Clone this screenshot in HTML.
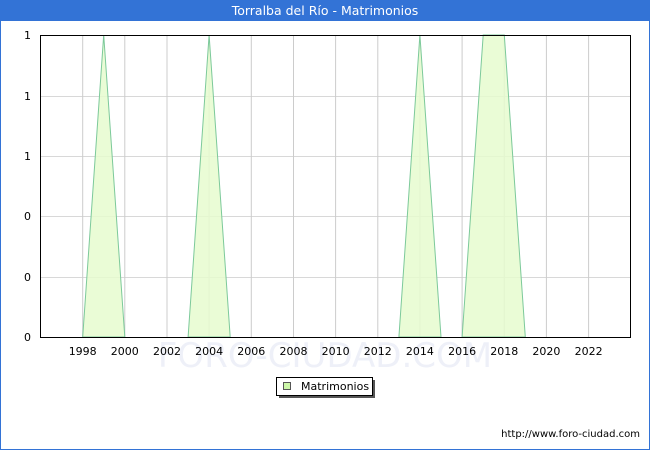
<!DOCTYPE html><html><head><style>
body{margin:0;width:650px;height:450px;overflow:hidden;font-family:"DejaVu Sans",sans-serif;}
.frame{position:absolute;left:0;top:0;width:648px;height:448px;border:1px solid #3373d6;background:#fff}
.title{position:absolute;left:0;top:0;width:650px;height:21px;background:#3373d6;color:#fff;font-size:12.5px;text-align:center;line-height:22px}
</style></head><body>
<div class="frame"></div>
<div class="title">Torralba del Río - Matrimonios</div>
<svg width="650" height="450" style="position:absolute;left:0;top:0" font-family="DejaVu Sans,sans-serif" font-size="11">
<text x="325" y="367" font-size="34" fill="#eef0f8" text-anchor="middle">FORO-CIUDAD.COM</text>
<g stroke="#d8d8d8" stroke-width="1">
<line x1="40" y1="96.5" x2="630" y2="96.5"/><line x1="40" y1="156.5" x2="630" y2="156.5"/><line x1="40" y1="216.5" x2="630" y2="216.5"/><line x1="40" y1="277.5" x2="630" y2="277.5"/>
</g>
<g stroke="#cccccc" stroke-width="1">
<line x1="82.7" y1="35" x2="82.7" y2="337"/><line x1="124.8" y1="35" x2="124.8" y2="337"/><line x1="167" y1="35" x2="167" y2="337"/><line x1="209.1" y1="35" x2="209.1" y2="337"/><line x1="251.3" y1="35" x2="251.3" y2="337"/><line x1="293.5" y1="35" x2="293.5" y2="337"/><line x1="335.6" y1="35" x2="335.6" y2="337"/><line x1="377.8" y1="35" x2="377.8" y2="337"/><line x1="419.9" y1="35" x2="419.9" y2="337"/><line x1="462.1" y1="35" x2="462.1" y2="337"/><line x1="504.3" y1="35" x2="504.3" y2="337"/><line x1="546.4" y1="35" x2="546.4" y2="337"/><line x1="588.6" y1="35" x2="588.6" y2="337"/>
</g>
<g fill="#e6fccf" fill-opacity="0.85" stroke="#7cc99a" stroke-width="1">
<polygon points="82.7,337 103.7,35 124.8,337"/>
<polygon points="188.1,337 209.1,35 230.2,337"/>
<polygon points="398.9,337 419.9,35 441,337"/>
<polygon points="462.1,337 483.2,35 504.3,35 525.3,337"/>
</g>
<rect x="40.5" y="35.5" width="590" height="302" fill="none" stroke="#000" stroke-width="1"/>
<g text-anchor="end" fill="#000">
<text x="31" y="39">1</text><text x="31" y="100">1</text><text x="31" y="160">1</text><text x="31" y="220">0</text><text x="31" y="281">0</text><text x="31" y="341">0</text>
</g>
<g text-anchor="middle" fill="#000">
<text x="82.7" y="355">1998</text><text x="124.8" y="355">2000</text><text x="167" y="355">2002</text><text x="209.1" y="355">2004</text><text x="251.3" y="355">2006</text><text x="293.5" y="355">2008</text><text x="335.6" y="355">2010</text><text x="377.8" y="355">2012</text><text x="419.9" y="355">2014</text><text x="462.1" y="355">2016</text><text x="504.3" y="355">2018</text><text x="546.4" y="355">2020</text><text x="588.6" y="355">2022</text>
</g>
<rect x="279" y="380" width="96" height="18" fill="#555"/>
<rect x="276.5" y="377.5" width="96" height="18" fill="#fff" stroke="#000"/>
<rect x="283.5" y="382.5" width="7" height="7" fill="#ccf7a8" stroke="#555"/>
<text x="301" y="390" font-size="11">Matrimonios</text>
<text x="640" y="437" text-anchor="end" font-size="10">http://www.foro-ciudad.com</text>
</svg>
</body></html>
